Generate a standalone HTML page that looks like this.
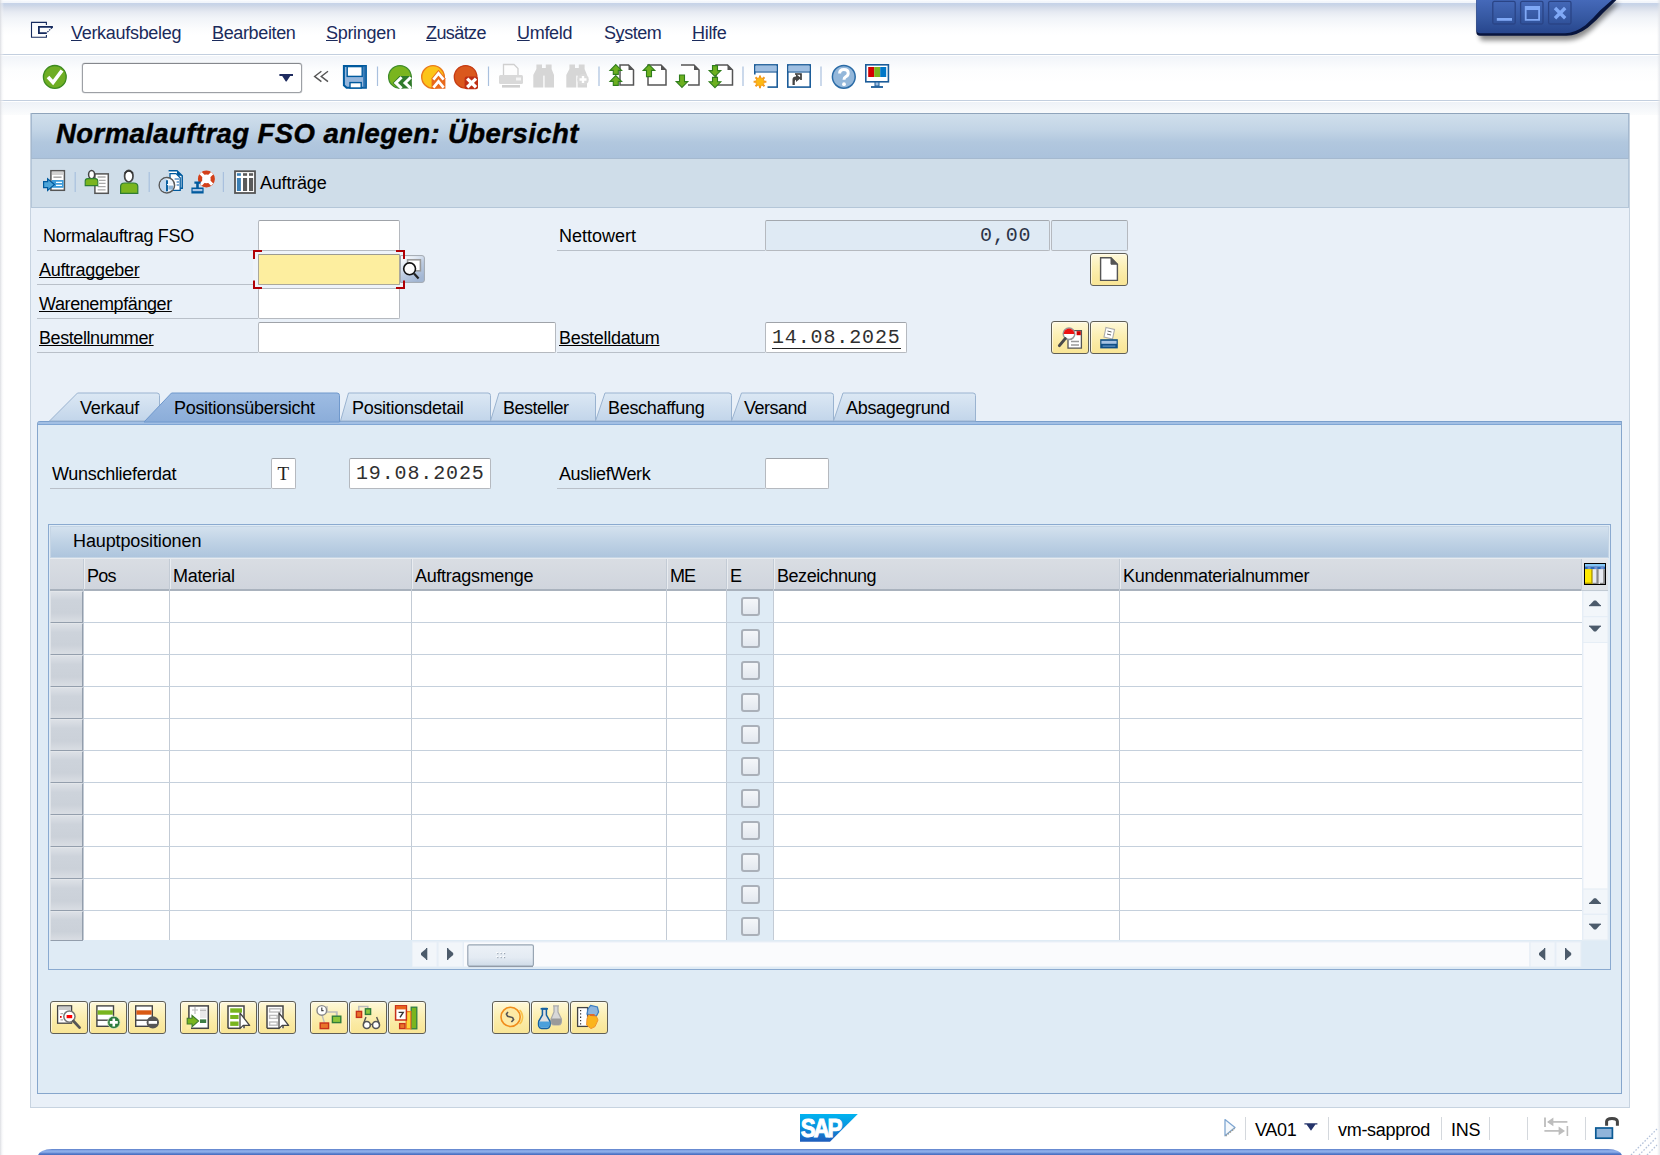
<!DOCTYPE html>
<html>
<head>
<meta charset="utf-8">
<title>Normalauftrag FSO anlegen: Übersicht</title>
<style>
*{box-sizing:border-box;margin:0;padding:0}
html,body{width:1660px;height:1155px;overflow:hidden;background:#fff}
body{font-family:"Liberation Sans",sans-serif;font-size:18px;color:#000;position:relative}
.a{position:absolute}
.t{position:absolute;white-space:nowrap;line-height:20px;height:20px}
/* top */
#topgrad{left:0;top:0;width:1660px;height:36px;background:linear-gradient(#fff 0px,#f4f7fc 1px,#f1f5fb 2.6px,#c6d3e8 3.2px,#cad5e7 5px,#d8deea 8px,#e6eaf2 12px,#f1f4f8 18px,#fbfcfd 28px,#fff 35px)}
#leftedge{z-index:50;left:0;top:0;width:5px;height:1155px;background:linear-gradient(90deg,rgba(215,217,222,.85),rgba(240,241,244,.5) 2px,rgba(255,255,255,0) 4px)}
.menu{color:#1b2b5c;font-size:18px;top:23px;letter-spacing:-0.3px}
.menu u{text-decoration:underline;text-underline-offset:1px;text-decoration-thickness:1px;text-decoration-skip-ink:none}
#menuline{left:0;top:54px;width:1660px;height:2px;background:linear-gradient(#c3cfdf 0,#c3cfdf 1px,#fff 1px)}
#tbbg{left:0;top:56px;width:1660px;height:44px;background:linear-gradient(#f1f4f9,#fcfdfe 30%,#fff 60%)}
#tbline{left:0;top:100px;width:1660px;height:2px;background:linear-gradient(#c3cfdf 0,#c3cfdf 1px,#fff 1px)}
#gapbg{left:0;top:102px;width:1660px;height:13px;background:linear-gradient(#eef2f7,#fbfcfd)}
#cmd{left:82px;top:63px;width:220px;height:30px;background:#fff;border:1px solid #9da0a5;border-top-color:#85888d;border-radius:3px;box-shadow:0 0 0 0.5px rgba(150,154,160,.35)}
/* main */
#main{left:30px;top:113px;width:1600px;height:995px;background:#e9f0f8;border:1px solid #c7d3e0;border-top:none}
#titlebar{left:31px;top:113px;width:1598px;height:46px;background:linear-gradient(#d0dfec 0,#c3d5e6 35%,#b1c7de 65%,#abc2dc 100%);border:1px solid #a5b9cf;border-top-color:#8fa4bb}
#title{left:56px;top:118px;font:italic bold 27.5px "Liberation Sans",sans-serif;line-height:32px;height:32px;letter-spacing:0.43px;color:#000;-webkit-text-stroke:0.45px #000}
#apptb{left:31px;top:159px;width:1598px;height:49px;background:#cfdde9;border:1px solid #b4c6d8;border-top:none}
.lbl{font-size:18px;color:#000}
.ul{text-decoration:underline;text-underline-offset:1px;text-decoration-thickness:1px;text-decoration-skip-ink:none}
.lline{height:1px;background:#b9c0c9}
.inp{background:#fff;border:1px solid #b5b9bf;border-top-color:#9fa3a9;border-radius:2px}
.ro{background:#dfeaf4;border:1px solid #b5b9bf;border-top-color:#a3a8ae;border-radius:2px}
.mono{font-family:"Liberation Mono",monospace;font-size:20px;color:#303030;letter-spacing:0.87px !important}
.btn{background:linear-gradient(#fef8da,#fcf0b6 40%,#fae9a0 75%,#f9e596);border:1px solid #605f57;border-radius:3px;width:38px;height:33px;box-shadow:inset 1px 1px 0 rgba(255,255,255,.55)}
/* tabs */
#tabpanel{left:37px;top:421px;width:1585px;height:673px;background:linear-gradient(#7a9fcc 0,#7a9fcc 1px,#a2bfe4 1px,#a2bfe4 3px,#80a6d4 3px,#80a6d4 4px,#dfebf5 4px);border:1px solid #86a6cc;border-top:none;border-radius:3px 0 0 0}
/* table */
#tblbox{left:48px;top:524px;width:1563px;height:446px;border:1px solid #8aaad0;background:#dfebf5}
#tblcap{left:50px;top:526px;width:1559px;height:32px;background:linear-gradient(#d3e1ee,#bfd2e5 50%,#aec5dd);border:1px solid #c5d5e5}
#colhdr{left:50px;top:558px;width:1558px;height:33px;background:linear-gradient(#d9dde3,#d0d5dd);border-top:1px solid #e8ebef;border-bottom:2px solid #a9b2bd}
#grid{left:84px;top:591px;width:1498px;height:349px;background:#fff}
.hl{height:1px;background:#c5d0dc}
.vl{top:559px;width:1px;height:381px;background:#c3cbd5}
.sel{left:50px;width:33px;background:linear-gradient(#dce0e6 0,#cdd3db 28%,#cbd1d9 70%,#d9dde3 100%);border:1px solid #939eac;border-top-color:#e3e6ea;border-left-color:#dfe3e8;border-radius:1px}
#ecol{left:727px;top:591px;width:46px;height:349px;background:#dfebf5}
.cb{left:741px;width:19px;height:19px;margin-top:1px;background:linear-gradient(#f4f6f9,#e3e8ef);border:2px solid #aab0b9;border-radius:3px}
#vsb{left:1583px;top:591px;width:25px;height:350px;background:#fbfcfd;border-left:1px solid #d5dde6}
#hsb{left:412px;top:942px;width:1170px;height:25px;background:#fbfcfd}
/* status */
#status{left:0;top:1108px;width:1660px;height:47px;background:#fff}
.ssep{top:1117px;width:1px;height:23px;background:#d4d8dd}
.st{font-size:18px;color:#000;margin-top:0.6px}
#bluebar{left:38px;top:1149px;width:1584px;height:12px;background:linear-gradient(#5b7ec8 0,#86a8e6 1.6px,#8fb0ea 3px,#5f84d0 4.4px,#466bbb 6px);border-radius:14px 14px 0 0 / 7px 7px 0 0}
</style>
</head>
<body>
<!-- TOP -->
<div class="a" id="topgrad"></div>
<div class="a" id="menuline"></div>
<div class="a" id="tbbg"></div>
<div class="a" id="tbline"></div>
<div class="a" id="gapbg"></div>
<div class="a" id="leftedge"></div>
<div class="a" style="z-index:50;left:1657px;top:0;width:3px;height:1155px;background:linear-gradient(90deg,rgba(255,255,255,0),rgba(225,227,232,.8))"></div>

<svg class="a" style="left:28px;top:18px" width="30" height="24" viewBox="28 18 30 24">
<path d="M46.4 25 V22.4 H31.5 V37.3 H46.4 V35" fill="none" stroke="#152a5e" stroke-width="1.1"/>
<path d="M52.6 26.9 H38.9 V33.1 H46.8" fill="none" stroke="#152a5e" stroke-width="1.8"/>
<path d="M52 27.6 L47 32.6" stroke="#152a5e" stroke-width="1.2" stroke-dasharray="1.5 1"/>
<path d="M49.5 26.2 H53 V27.6 L51.6 28.6 Z" fill="#152a5e"/>
</svg>
<div class="t menu" style="left:71px"><u>V</u>erkaufsbeleg</div>
<div class="t menu" style="left:212px;letter-spacing:-0.36px"><u>B</u>earbeiten</div>
<div class="t menu" style="left:326px"><u>S</u>pringen</div>
<div class="t menu" style="left:426px;letter-spacing:-0.6px"><u>Z</u>usätze</div>
<div class="t menu" style="left:517px"><u>U</u>mfeld</div>
<div class="t menu" style="left:604px;letter-spacing:-0.45px">S<u>y</u>stem</div>
<div class="t menu" style="left:692px"><u>H</u>ilfe</div>

<div class="a" id="cmd"></div>

<!-- TOOLBAR ICONS -->
<svg class="a" style="left:0;top:55px" width="900" height="45" viewBox="0 55 900 45">
<g id="ic_ok">
<circle cx="54.8" cy="76.9" r="11.4" fill="#6fae24" stroke="#3c8a1f" stroke-width="1.3"/>
<path d="M48 77 L53 82.5 L62 70.5" fill="none" stroke="#fff" stroke-width="3.6" stroke-linejoin="miter"/>
</g>
<path d="M279.4 74 H293 V76 H290.2 L286.6 81.6 H285.8 L282.2 76 H279.4 Z" fill="#1f2c60"/>
<g fill="none" stroke="#555" stroke-width="1.4"><path d="M321.4 71.2 L314.6 76.4 L321.4 81.6"/><path d="M328 71.2 L321.2 76.4 L328 81.6"/></g>
<g id="ic_save">
<path d="M343.9 66 H365.9 V87.8 H346.6 L343.9 85.2 Z" fill="#95b6dc" stroke="#005a9e" stroke-width="2"/>
<rect x="347.2" y="66.6" width="15" height="9.8" fill="#fff" stroke="#005a9e" stroke-width="1.4"/>
<rect x="363.2" y="66.4" width="2.4" height="21" fill="#2f74b2"/>
<rect x="350" y="82.6" width="11.2" height="5.4" fill="#fff" stroke="#005a9e" stroke-width="1.4"/>
</g>
<g stroke="#a9c0de" stroke-width="1.2"><path d="M377.5 66.5V86"/><path d="M488.5 66.5V86"/><path d="M599 66.5V86"/><path d="M743 66.5V86"/><path d="M821 66.5V86"/></g>
<g id="ic_back">
<circle cx="399.9" cy="76.9" r="11.3" fill="#7ab51e" stroke="#3f8c2c" stroke-width="1.3"/>
<path d="M392.6 82.9 L399.4 75.9 H411.6 L412 88.6 H398.6 Z" fill="#2f7a2a"/>
<g fill="none" stroke="#fff" stroke-width="3"><path d="M401.6 77.2 L395.8 82.9 L401.6 88.4"/><path d="M410.8 77.2 L405 82.9 L410.8 88.4"/></g>
</g>
<g id="ic_exit">
<circle cx="433" cy="76.9" r="11.3" fill="#fcc419" stroke="#ea7a1c" stroke-width="1.4"/>
<path d="M431.6 88.8 V78.2 L438.5 69.8 L445.4 78.2 V88.8 Z" fill="#e8691c"/>
<g fill="none" stroke="#fff" stroke-width="2.8"><path d="M433.4 79.6 L438.5 73.4 L443.6 79.6"/><path d="M433.4 87.6 L438.5 81.4 L443.6 87.6"/></g>
</g>
<g id="ic_cancel">
<circle cx="465.6" cy="76.9" r="11.3" fill="#da581d" stroke="#c63a12" stroke-width="1.3"/>
<rect x="464.6" y="76.4" width="13.4" height="12.8" rx="2" fill="#be2f14"/>
<path d="M467.2 78.6 L476 87.2 M476 78.6 L467.2 87.2" stroke="#fff" stroke-width="3.3"/>
</g>
<g id="ic_print" >
<path d="M503.5 75 V64.5 H514 L518 68.5 V75" fill="#fdfdfd" stroke="#d0d0d0" stroke-width="1.3"/>
<rect x="499" y="75" width="24" height="9" rx="1.5" fill="#d9d9d9"/>
<rect x="516" y="77.5" width="5" height="3" fill="#f4f4f4"/>
<rect x="502" y="85" width="18" height="2.6" fill="#cfcfcf"/>
</g>
<g id="ic_find" fill="#d6d6d6">
<path d="M536.4 64.5 H542 V69 L543.3 75 V87.6 H533.3 V75 L536.4 69 Z"/>
<path d="M545.8 64.5 H551.6 V69 L554 75 V87.6 H544.6 V75 L545.8 69 Z"/>
<rect x="540" y="68" width="7" height="7.6"/>
</g>
<g id="ic_findn" fill="#d6d6d6">
<path d="M569.4 64.5 H575 V69 L576.3 75 V87.6 H566.3 V75 L569.4 69 Z"/>
<path d="M578.8 64.5 H584.6 V69 L587 75 V87.6 H577.6 V75 L578.8 69 Z"/>
<rect x="573" y="68" width="7" height="7.6"/>
<circle cx="583" cy="79.5" r="5.8" fill="#dadada"/>
<path d="M583 76 V83 M579.5 79.5 H586.5" stroke="#fff" stroke-width="2.4"/>
</g>
<g id="pages" fill="#fff" stroke="#555" stroke-width="1.5">
<path d="M620 65 H628.5 L633.5 70 V85 H620 Z"/>
<path d="M648 65 H661 L666 70 V85 H648 Z"/>
<path d="M681 65 H694 L699 70 V85 H688"/>
<path d="M716 65 H727.5 L732.5 70 V85 H716 Z"/>
</g>
<g fill="#555"><path d="M628.5 65 L633.5 70 H628.5Z"/><path d="M661 65 L666 70 H661Z"/><path d="M694 65 L699 70 H694Z"/><path d="M727.5 65 L732.5 70 H727.5Z"/></g>
<g fill="#6db020" stroke="#2f7d1c" stroke-width="1.1">
<path d="M615.8 64.6 L621.6 70.4 H618.3 V74.4 H613.3 V70.4 H610 Z"/>
<path d="M615.8 75.6 L621.6 81.4 H618.3 V85.4 H613.3 V81.4 H610 Z"/>
<path d="M649 64.6 L654.8 70.4 H651.5 V76.6 H646.5 V70.4 H643.2 Z"/>
<path d="M682 87.4 L687.8 81.6 H684.5 V75 H679.5 V81.6 H676.2 Z"/>
<path d="M715 76.4 L720.8 70.6 H717.5 V65.6 H712.5 V70.6 H709.2 Z"/>
<path d="M715 87.6 L720.8 81.8 H717.5 V77.4 H712.5 V81.8 H709.2 Z"/>
</g>
<g id="ic_newsess">
<rect x="754.8" y="64.9" width="22.4" height="22.2" fill="#fff" stroke="#1b5c99" stroke-width="1.6"/>
<rect x="755.6" y="65.7" width="20.8" height="5.8" fill="#9fbfe2"/>
<path d="M755 72H777" stroke="#1b5c99" stroke-width="1.2"/>
<rect x="752.5" y="74.5" width="15" height="14.5" fill="#fff"/>
<g stroke="#f39a1e" stroke-width="2"><path d="M760 75.4V88.2M753.6 81.8H766.4M755.5 77.3L764.5 86.3M764.5 77.3L755.5 86.3"/></g>
<circle cx="760" cy="81.8" r="4.1" fill="#fcb813" stroke="#f39a1e" stroke-width="0.8"/>
</g>
<g id="ic_shortcut">
<rect x="787.8" y="64.9" width="22.4" height="22.2" fill="#fff" stroke="#1b5c99" stroke-width="1.6"/>
<rect x="788.6" y="65.7" width="20.8" height="5.8" fill="#9fbfe2"/>
<path d="M788 72H810" stroke="#1b5c99" stroke-width="1.2"/>
<path d="M792.5 85 V79.5 Q792.5 76.5 796 76.5 V74 L801 78 L796 82 V79.8 Q794.8 79.8 794.8 81.5 V85 Z" fill="#444"/>
<path d="M795 74 H801 V80" fill="none" stroke="#333" stroke-width="1.6"/>
</g>
<g id="ic_help">
<circle cx="843.8" cy="76.8" r="11.4" fill="#93b7da" stroke="#2a6ba6" stroke-width="1.5"/>
<path d="M839.6 73.6 Q839.6 69.6 843.8 69.6 Q848.2 69.6 848.2 73.2 Q848.2 75.6 845.6 76.8 Q844 77.6 844 79.8" fill="none" stroke="#fff" stroke-width="3"/>
<circle cx="844" cy="84.2" r="1.9" fill="#fff"/>
</g>
<g id="ic_mon">
<rect x="865.8" y="64.8" width="22.6" height="17" fill="#fff" stroke="#1b5c99" stroke-width="1.6"/>
<rect x="868.2" y="67" width="6" height="10" fill="#d40000"/><rect x="874.2" y="67" width="6" height="10" fill="#7ab51d"/><rect x="880.2" y="67" width="6" height="10" fill="#0077c8"/>
<rect x="875" y="82" width="4" height="4" fill="#9fbfe2" stroke="#1b5c99" stroke-width="1"/>
<path d="M871 87H883" stroke="#1b5c99" stroke-width="1.8"/>
</g>
</svg>

<!-- WINDOW CONTROLS -->
<svg class="a" style="left:1440px;top:0" width="220" height="56" viewBox="1440 0 220 56">
<defs>
<linearGradient id="wg" x1="0" y1="0" x2="0" y2="1"><stop offset="0" stop-color="#4569b9"/><stop offset="0.6" stop-color="#34569f"/><stop offset="1" stop-color="#27468d"/></linearGradient>
<filter id="wsh" x="-10%" y="-30%" width="120%" height="190%"><feGaussianBlur stdDeviation="2.6"/></filter>
</defs>
<path d="M1478 0 V33 Q1478 37.5 1482 37.5 H1566 Q1578 37.5 1590 27 L1618 0 Z" fill="#000" opacity=".45" filter="url(#wsh)" transform="translate(1.5 3)"/>
<path d="M1476.3 0 V31.8 Q1476.3 35.8 1480 35.8 H1566.5 Q1577 35.8 1588 27.6 Q1597 20 1603 13 L1616.4 0 Z" fill="#08153e"/>
<path d="M1476.3 0 V29.8 Q1476.3 33.2 1480 33.2 H1565 Q1574.5 33.2 1585.4 25.2 Q1594 17.6 1600 10.6 L1612 0 Z" fill="url(#wg)"/>
<g fill="none" stroke="#2a4486" stroke-width="1.3">
<rect x="1492.8" y="1.4" width="22.4" height="22.6" rx="1.5"/>
<rect x="1520.6" y="1.4" width="22.4" height="22.6" rx="1.5"/>
<rect x="1548.6" y="1.4" width="22.4" height="22.6" rx="1.5"/>
</g>
<rect x="1496.8" y="18" width="15.2" height="2.8" fill="#80a9f6"/>
<path d="M1524.8 6 H1540 V20.8 H1524.8 Z M1526.6 10 V19 H1538.2 V10 Z" fill="#80a9f6" fill-rule="evenodd"/>
<path d="M1555 8 L1565.2 18.2 M1565.2 8 L1555 18.2" stroke="#80a9f6" stroke-width="3.4"/>
</svg>

<!-- MAIN -->
<div class="a" id="main"></div>
<div class="a" id="titlebar"></div>
<div class="t" id="title">Normalauftrag FSO anlegen: Übersicht</div>
<div class="a" id="apptb"></div>
<div class="t lbl" style="left:260px;top:173px;letter-spacing:-0.2px">Aufträge</div>

<!-- APP TOOLBAR ICONS -->
<svg class="a" style="left:30px;top:160px" width="300" height="46" viewBox="30 160 300 46">
<g stroke="#a9c0de" stroke-width="1.2"><path d="M75.2 172V192"/><path d="M149.2 172V192"/><path d="M223.4 172V192"/></g>
<g id="a1">
<rect x="50.9" y="170.7" width="13.5" height="19.6" fill="#fff" stroke="#555" stroke-width="1.5"/>
<rect x="52" y="172" width="11.4" height="3" fill="#d2d2d2"/>
<path d="M53.4 177.2H61.6" stroke="#a8a8a8" stroke-width="1.5"/>
<rect x="51.8" y="180" width="11.8" height="7.8" fill="#3d9bd9"/>
<path d="M56 182.4H62M56 185.4H62" stroke="#fff" stroke-width="1.3"/>
<path d="M43.6 181.6 H47.6 V178.8 L54.4 184.6 L47.6 190.4 V187.6 H43.6 Z" fill="#4da5d9" stroke="#005a9e" stroke-width="1.2"/>
</g>
<g id="a2">
<rect x="94.9" y="173.9" width="13.4" height="19.4" fill="#fff" stroke="#555" stroke-width="1.5"/>
<path d="M97.6 177H105.6M99 180.4H105.6M99 183.4H105.6M97.6 186.6H105.6M97.6 189.8H105.6" stroke="#aaa" stroke-width="1.3"/>
<ellipse cx="91.6" cy="174.6" rx="3" ry="4.2" fill="#fff" stroke="#444" stroke-width="1.5"/>
<path d="M85.2 185.6 V181 Q85.2 178.6 88 178.6 H95 Q97.8 178.6 97.8 181 V185.6 Z" fill="#7ab51e" stroke="#2f7d32" stroke-width="1.1"/>
</g>
<g id="a3">
<ellipse cx="128.8" cy="176.2" rx="4.2" ry="5.8" fill="#fff" stroke="#444" stroke-width="1.7"/>
<path d="M124.6 173.4 Q128.8 168.6 133 173.4" fill="none" stroke="#333" stroke-width="1.6"/>
<path d="M120.6 193.4 V186.4 Q120.6 183.2 124.6 183 H133.4 Q137.8 183.2 137.8 186.4 V193.4 Z" fill="#7ab51e" stroke="#2f7d32" stroke-width="1.2"/>
</g>
<g id="a4">
<path d="M168.6 170.7 H177 L182.2 175.8 V188.2 H176" fill="#fff" stroke="#005a9e" stroke-width="1.5"/>
<path d="M177 170.7 V175.8 H182.2 Z" fill="#005a9e"/>
<path d="M170 173.6 H176 L180.2 177.8 V190.4 H170 Z" fill="#fff" stroke="#005a9e" stroke-width="1.3"/>
<path d="M174.6 179H179M176.6 182H179M176.6 185H179" stroke="#5a93c8" stroke-width="1.3"/>
<circle cx="166.9" cy="185.2" r="7.7" fill="#eef4fa" stroke="#5a5a5a" stroke-width="1.5"/>
<path d="M166.9 178.2 A7 7 0 0 0 166.9 192.2 Z" fill="#c2d8ee"/>
<rect x="168.4" y="185.6" width="4.6" height="4" fill="#8fb3d4"/>
<path d="M167 180.2 V191.2" stroke="#005a9e" stroke-width="1.9"/>
<path d="M167 184.6 H173" stroke="#fff" stroke-width="1"/>
</g>
<g id="a5">
<circle cx="206.4" cy="178.9" r="6.4" fill="#fff" stroke="#d3401a" stroke-width="4.2"/>
<path d="M200.6 173.1 L212.2 184.7 M212.2 173.1 L200.6 184.7" stroke="#fff" stroke-width="3.2"/>
<path d="M194.4 181.6 H200.6 V183.8 H198.8 V187.4 H203.6 V193.4 H191.4 V187.4 H196.2 V183.8 H194.4 Z" fill="#005a9e"/>
<rect x="192.6" y="189" width="9.8" height="2.2" fill="#a9c4e4"/>
</g>
<g id="a6">
<rect x="235" y="171.2" width="20" height="21.8" fill="#fff" stroke="#555" stroke-width="1.8"/>
<rect x="236.9" y="178" width="4" height="13" fill="#3a7fb5"/><rect x="236.9" y="173.2" width="4" height="2.6" fill="#3a7fb5"/>
<rect x="243" y="178" width="4.1" height="13" fill="#5a5a5a"/><rect x="243" y="173.2" width="4.1" height="2.6" fill="#5a5a5a"/>
<rect x="249" y="178" width="4.1" height="13" fill="#5a5a5a"/><rect x="249" y="173.2" width="4.1" height="2.6" fill="#5a5a5a"/>
</g>
</svg>

<!-- FORM -->
<div class="t lbl" style="left:43px;top:226px;letter-spacing:-0.3px">Normalauftrag FSO</div>
<div class="t lbl ul" style="left:39px;top:260px;letter-spacing:-0.3px">Auftraggeber</div>
<div class="t lbl ul" style="left:39px;top:294px;letter-spacing:-0.4px">Warenempfänger</div>
<div class="t lbl ul" style="left:39px;top:328px;letter-spacing:-0.42px">Bestellnummer</div>
<div class="t lbl" style="left:559px;top:226px;letter-spacing:0px">Nettowert</div>
<div class="t lbl ul" style="left:559px;top:328px;letter-spacing:-0.3px">Bestelldatum</div>
<div class="a lline" style="left:37px;top:250px;width:221px"></div>
<div class="a lline" style="left:37px;top:284px;width:221px"></div>
<div class="a lline" style="left:37px;top:318px;width:221px"></div>
<div class="a lline" style="left:37px;top:352px;width:221px"></div>
<div class="a lline" style="left:557px;top:250px;width:208px"></div>
<div class="a lline" style="left:557px;top:352px;width:208px"></div>
<div class="a inp" style="left:258px;top:220px;width:142px;height:31px"></div>
<div class="a inp" style="left:258px;top:288px;width:142px;height:31px"></div>
<div class="a" style="left:253px;top:250px;width:152px;height:39px;background:#eef3fa;border-top:1px solid #b7bbc2;border-bottom:1px solid #b7bbc2"></div>
<div class="a" style="left:258px;top:254px;width:142px;height:31px;background:#fdee9f;border:1px solid #aaa89b;border-top-color:#9b9a92;border-radius:1px"></div>
<svg class="a" style="left:250px;top:246px" width="180" height="48" viewBox="250 246 180 48">
<defs><linearGradient id="f4g" x1="0" y1="0" x2="0.6" y2="1"><stop offset="0" stop-color="#ffffff"/><stop offset="0.3" stop-color="#e6edf6"/><stop offset="0.6" stop-color="#bccbe1"/><stop offset="1" stop-color="#a3b7d4"/></linearGradient></defs>

<path d="M400.5 255.6 H422 Q424.4 255.6 424.4 258 V280.2 Q424.4 282.4 422 282.4 H400.5 Z" fill="url(#f4g)" stroke="#a2a8b0" stroke-width="1"/>
<rect x="407.6" y="259.8" width="12.8" height="11" fill="#fff" stroke="#9a9a9a" stroke-width="1.6"/>
<circle cx="409.6" cy="268.8" r="5.9" fill="#fbfbfb" stroke="#111" stroke-width="1.6"/>
<path d="M414 273.4 L418.6 278.4" stroke="#222" stroke-width="2.2"/>
<g fill="none" stroke="#b00005" stroke-width="2">
<path d="M254 259 V251 H262"/><path d="M396 251 H404 V259"/><path d="M254 280.5 V288 H262"/><path d="M396 288 H404 V280.5"/>
</g>
</svg>
<div class="a inp" style="left:258px;top:322px;width:298px;height:31px"></div>
<div class="a ro" style="left:765px;top:220px;width:285px;height:31px"></div>
<div class="t mono" style="left:980px;top:226px;color:#2b3346">0,00</div>
<div class="a ro" style="left:1051px;top:220px;width:77px;height:31px"></div>
<div class="a inp" style="left:765px;top:322px;width:142px;height:31px"></div>
<div class="t mono" style="left:772px;top:328px">14.08.2025</div>
<div class="a" style="left:772px;top:348px;width:129px;height:1px;background:#222"></div>
<div class="a btn" id="b_doc" style="left:1090px;top:253px"></div>
<div class="a btn" id="b_find" style="left:1051px;top:321px"></div>
<div class="a btn" id="b_stamp" style="left:1090px;top:321px"></div>
<svg class="a" style="left:1045px;top:250px" width="90" height="110" viewBox="1045 250 90 110">
<path d="M1100.6 257.8 H1111 L1117.4 264.2 V280.4 H1100.6 Z" fill="#fff" stroke="#555" stroke-width="1.4"/>
<path d="M1111 257.8 L1117.4 264.2 H1111 Z" fill="#555" stroke="#555" stroke-width="1"/>
<g id="fi">
<path d="M1068 330.6 H1081.4 V348.2 H1068 Z" fill="#fff" stroke="#555" stroke-width="1.3"/>
<rect x="1076.6" y="331.2" width="4.2" height="4" fill="#d00000"/>
<path d="M1071 341.5H1079M1071 345H1079" stroke="#999" stroke-width="1.4"/>
<circle cx="1069" cy="333.8" r="5.8" fill="#fff" stroke="#999" stroke-width="1.5"/>
<path d="M1063.6 334 A5.4 5.4 0 0 1 1074.4 334 Z" fill="#ee1111"/>
<path d="M1065.2 338.6 L1059.4 345.6" stroke="#4a4a4a" stroke-width="3" stroke-linecap="round"/>
</g>
<g id="st">
<path d="M1106 327.5 L1114.5 329.5 L1112.5 339 L1104 337 Z" fill="#fff" stroke="#aaa" stroke-width="1.1"/>
<path d="M1107.5 331 L1111.5 332 M1107 334 L1111 335" stroke="#666" stroke-width="1"/>
<rect x="1100.2" y="339.2" width="17.6" height="9.2" fill="#0f4f86"/>
<rect x="1101.4" y="340.8" width="15.2" height="3" fill="#a6c3e4"/>
<rect x="1102.6" y="345.6" width="12.8" height="1" fill="#6f9fd0"/>
</g>
</svg>

<!-- TABS -->
<div class="a" id="tabpanel"></div>
<svg class="a" style="left:0;top:385px" width="1000" height="42" viewBox="0 385 1000 42">
<defs>
<linearGradient id="tg" x1="0" y1="0" x2="0" y2="1"><stop offset="0" stop-color="#dce8f4"/><stop offset="1" stop-color="#c2d5ea"/></linearGradient>
<linearGradient id="tga" x1="0" y1="0" x2="0" y2="1"><stop offset="0" stop-color="#9ebce3"/><stop offset="1" stop-color="#8badd9"/></linearGradient>
</defs>
<g stroke="#9ab3d0" stroke-width="1" fill="url(#tg)">
<path d="M49.5 421 L77.5 393 L157 393 Q159.5 393 159.5 395.5 L159.5 421 Z"/>
<path d="M340.5 421 L348.5 393 L488 393 Q490.5 393 490.5 395.5 L490.5 421 Z"/>
<path d="M490.5 421 L499 393 L593 393 Q595.5 393 595.5 395.5 L595.5 421 Z"/>
<path d="M595.5 421 L605 393 L729 393 Q731.5 393 731.5 395.5 L731.5 421 Z"/>
<path d="M731.5 421 L741.5 393 L831 393 Q833.5 393 833.5 395.5 L833.5 421 Z"/>
<path d="M833.5 421 L843 393 L973 393 Q975.5 393 975.5 395.5 L975.5 421 Z"/>
</g>
<path d="M144 422 L171.5 393 L337 393 Q339.5 393 339.5 395.5 L339.5 422 Z" fill="url(#tga)" stroke="#6f98cc" stroke-width="1"/>
</svg>
<div class="t lbl" style="left:80px;top:398px;letter-spacing:-0.3px">Verkauf</div>
<div class="t lbl" style="left:174px;top:398px;letter-spacing:-0.3px">Positionsübersicht</div>
<div class="t lbl" style="left:352px;top:398px;letter-spacing:-0.3px">Positionsdetail</div>
<div class="t lbl" style="left:503px;top:398px;letter-spacing:-0.5px">Besteller</div>
<div class="t lbl" style="left:608px;top:398px;letter-spacing:-0.3px">Beschaffung</div>
<div class="t lbl" style="left:744px;top:398px;letter-spacing:-0.5px">Versand</div>
<div class="t lbl" style="left:846px;top:398px;letter-spacing:-0.3px">Absagegrund</div>
<div class="t lbl" style="left:52px;top:464px;letter-spacing:-0.3px">Wunschlieferdat</div>
<div class="a lline" style="left:50px;top:488px;width:221px"></div>
<div class="a inp" style="left:271px;top:458px;width:25px;height:31px"></div>
<div class="t" style="left:277.5px;top:464px;font-family:'Liberation Serif',serif;font-size:19px;color:#222">T</div>
<div class="a inp" style="left:349px;top:458px;width:142px;height:31px"></div>
<div class="t mono" style="left:356px;top:464px">19.08.2025</div>
<div class="t lbl" style="left:559px;top:464px;letter-spacing:-0.4px">AusliefWerk</div>
<div class="a lline" style="left:557px;top:488px;width:208px"></div>
<div class="a inp" style="left:765px;top:458px;width:64px;height:31px"></div>

<!-- TABLE -->
<div class="a" id="tblbox"></div>
<div class="a" id="tblcap"></div>
<div class="t lbl" style="left:73px;top:531px;letter-spacing:-0.12px">Hauptpositionen</div>
<div class="a" id="colhdr"></div>
<div class="a" id="grid"></div>
<div class="a" id="ecol"></div>
<div class="a vl" style="left:83px"></div>
<div class="a" style="left:84px;top:559px;width:1px;height:30px;background:#e9ecf0"></div>
<div class="a vl" style="left:169px"></div>
<div class="a" style="left:170px;top:559px;width:1px;height:30px;background:#e9ecf0"></div>
<div class="a vl" style="left:411px"></div>
<div class="a" style="left:412px;top:559px;width:1px;height:30px;background:#e9ecf0"></div>
<div class="a vl" style="left:666px"></div>
<div class="a" style="left:667px;top:559px;width:1px;height:30px;background:#e9ecf0"></div>
<div class="a vl" style="left:726px"></div>
<div class="a" style="left:727px;top:559px;width:1px;height:30px;background:#e9ecf0"></div>
<div class="a vl" style="left:773px"></div>
<div class="a" style="left:774px;top:559px;width:1px;height:30px;background:#e9ecf0"></div>
<div class="a vl" style="left:1119px"></div>
<div class="a" style="left:1120px;top:559px;width:1px;height:30px;background:#e9ecf0"></div>
<div class="a vl" style="left:1581px;height:32px"></div>
<div class="a sel" style="top:591px;height:32px"></div>
<div class="a cb" style="top:596px"></div>
<div class="a sel" style="top:623px;height:32px"></div>
<div class="a hl" style="top:622px;left:84px;width:1498px"></div>
<div class="a cb" style="top:628px"></div>
<div class="a sel" style="top:655px;height:32px"></div>
<div class="a hl" style="top:654px;left:84px;width:1498px"></div>
<div class="a cb" style="top:660px"></div>
<div class="a sel" style="top:687px;height:32px"></div>
<div class="a hl" style="top:686px;left:84px;width:1498px"></div>
<div class="a cb" style="top:692px"></div>
<div class="a sel" style="top:719px;height:32px"></div>
<div class="a hl" style="top:718px;left:84px;width:1498px"></div>
<div class="a cb" style="top:724px"></div>
<div class="a sel" style="top:751px;height:32px"></div>
<div class="a hl" style="top:750px;left:84px;width:1498px"></div>
<div class="a cb" style="top:756px"></div>
<div class="a sel" style="top:783px;height:32px"></div>
<div class="a hl" style="top:782px;left:84px;width:1498px"></div>
<div class="a cb" style="top:788px"></div>
<div class="a sel" style="top:815px;height:32px"></div>
<div class="a hl" style="top:814px;left:84px;width:1498px"></div>
<div class="a cb" style="top:820px"></div>
<div class="a sel" style="top:847px;height:32px"></div>
<div class="a hl" style="top:846px;left:84px;width:1498px"></div>
<div class="a cb" style="top:852px"></div>
<div class="a sel" style="top:879px;height:32px"></div>
<div class="a hl" style="top:878px;left:84px;width:1498px"></div>
<div class="a cb" style="top:884px"></div>
<div class="a sel" style="top:911px;height:30px"></div>
<div class="a hl" style="top:910px;left:84px;width:1498px"></div>
<div class="a cb" style="top:916px"></div>
<div class="t lbl" style="left:87px;top:566px;letter-spacing:-0.7px">Pos</div>
<div class="t lbl" style="left:173px;top:566px;letter-spacing:-0.3px">Material</div>
<div class="t lbl" style="left:415px;top:566px;letter-spacing:-0.3px">Auftragsmenge</div>
<div class="t lbl" style="left:670px;top:566px;letter-spacing:-1.1px">ME</div>
<div class="t lbl" style="left:730px;top:566px;letter-spacing:-0.3px">E</div>
<div class="t lbl" style="left:777px;top:566px;letter-spacing:-0.45px">Bezeichnung</div>
<div class="t lbl" style="left:1123px;top:566px;letter-spacing:-0.3px">Kundenmaterialnummer</div>
<!-- SCROLLBARS -->
<div class="a" style="left:1582px;top:559px;width:26px;height:31px;background:linear-gradient(#e4e7eb,#dde1e6)"></div>
<svg class="a" style="left:400px;top:555px" width="1215" height="420" viewBox="400 555 1215 420">
<defs><linearGradient id="thg" x1="0" y1="0" x2="0" y2="1"><stop offset="0" stop-color="#ecf1f7"/><stop offset="0.6" stop-color="#e4ebf3"/><stop offset="1" stop-color="#cfdbe8"/></linearGradient></defs>
<!-- config icon -->
<rect x="1584.5" y="563.5" width="21" height="21" fill="#eef0f4" stroke="#000" stroke-width="1"/>
<rect x="1585" y="564" width="20" height="2.4" fill="#84c8f6"/>
<rect x="1585" y="566.4" width="20" height="2.8" fill="#2b6cb8"/>
<rect x="1587.6" y="566.4" width="3" height="2.8" fill="#6f8fd0"/><rect x="1594.4" y="566.4" width="3" height="2.8" fill="#6f8fd0"/><rect x="1600.6" y="566.4" width="3" height="2.8" fill="#6f8fd0"/>
<rect x="1585" y="569.2" width="7.8" height="14.8" fill="#b39e00"/>
<rect x="1585" y="569.2" width="6.2" height="13.4" fill="#ffea00"/>
<rect x="1592.8" y="569.2" width="6" height="14.8" fill="#8a8a8a"/><rect x="1592.8" y="569.2" width="3.6" height="13.6" fill="#e8ebf2"/>
<rect x="1598.8" y="569.2" width="6.2" height="14.8" fill="#8a8a8a"/><rect x="1598.8" y="569.2" width="1" height="14.8" fill="#fff"/><rect x="1599.8" y="569.2" width="3.4" height="13.6" fill="#e8ebf2"/>
<!-- vertical scrollbar -->
<rect x="1582" y="590.6" width="26.4" height="350" fill="#e6eef6"/>
<rect x="1583.4" y="643" width="24" height="245.4" fill="#fafbfd"/>
<g fill="#f2f6fa">
<rect x="1583.4" y="591.2" width="24" height="24.8"/><rect x="1583.4" y="617.2" width="24" height="24.8"/>
<rect x="1583.4" y="889.6" width="24" height="24"/><rect x="1583.4" y="915" width="24" height="24.4"/>
</g>
<g fill="#4c5b6b">
<path d="M1589 605.8 L1594 600.4 H1596 L1601 605.8 Z"/><rect x="1589" y="605" width="12" height="1.2"/>
<path d="M1589 626 L1594 631.4 H1596 L1601 626 Z"/><rect x="1589" y="625.6" width="12" height="1.2"/>
<path d="M1589 903.6 L1594 898.2 H1596 L1601 903.6 Z"/><rect x="1589" y="902.8" width="12" height="1.2"/>
<path d="M1589 924 L1594 929.4 H1596 L1601 924 Z"/><rect x="1589" y="923.6" width="12" height="1.2"/>
</g>
<!-- horizontal scrollbar -->
<rect x="412" y="941" width="1169.4" height="26" fill="#e6eef6"/>
<rect x="464" y="942.4" width="1065.2" height="24" fill="#fafbfd"/>
<g fill="#f2f6fa">
<rect x="412.6" y="942.4" width="24" height="24"/><rect x="438.6" y="942.4" width="24" height="24"/>
<rect x="1530.6" y="942.4" width="24" height="24"/><rect x="1556.4" y="942.4" width="24" height="24"/>
</g>
<g fill="#4c5b6b">
<path d="M427 948 V960 L421 955 V953 Z"/><rect x="426" y="948" width="1.3" height="12"/>
<path d="M447.2 948 V960 L453.2 955 V953 Z"/><rect x="447" y="948" width="1.3" height="12"/>
<path d="M1545 948 V960 L1539 955 V953 Z"/><rect x="1544" y="948" width="1.3" height="12"/>
<path d="M1565.2 948 V960 L1571.2 955 V953 Z"/><rect x="1565" y="948" width="1.3" height="12"/>
</g>
<rect x="467.8" y="944.8" width="65.6" height="21.2" rx="1.5" fill="url(#thg)" stroke="#98a5b3" stroke-width="1.2"/>
<path d="M468.5 966.6 H533" stroke="#8d97a3" stroke-width="1"/>
<g fill="#fff"><rect x="496.4" y="952" width="1.4" height="1.4"/><rect x="499.8" y="952" width="1.4" height="1.4"/><rect x="503.2" y="952" width="1.4" height="1.4"/><rect x="496.4" y="956" width="1.4" height="1.4"/><rect x="499.8" y="956" width="1.4" height="1.4"/><rect x="503.2" y="956" width="1.4" height="1.4"/></g>
<g fill="#9aa5b2"><rect x="497.2" y="953" width="1.2" height="1.2"/><rect x="500.6" y="953" width="1.2" height="1.2"/><rect x="504" y="953" width="1.2" height="1.2"/><rect x="497.2" y="957" width="1.2" height="1.2"/><rect x="500.6" y="957" width="1.2" height="1.2"/><rect x="504" y="957" width="1.2" height="1.2"/></g>
</svg>


<!-- BUTTONS -->
<div class="a btn" id="bb0" style="left:50px;top:1001px;height:33px"></div>
<div class="a btn" id="bb1" style="left:89px;top:1001px;height:33px"></div>
<div class="a btn" id="bb2" style="left:128px;top:1001px;height:33px"></div>
<div class="a btn" id="bb3" style="left:180px;top:1001px;height:33px"></div>
<div class="a btn" id="bb4" style="left:219px;top:1001px;height:33px"></div>
<div class="a btn" id="bb5" style="left:258px;top:1001px;height:33px"></div>
<div class="a btn" id="bb6" style="left:310px;top:1001px;height:33px"></div>
<div class="a btn" id="bb7" style="left:349px;top:1001px;height:33px"></div>
<div class="a btn" id="bb8" style="left:388px;top:1001px;height:33px"></div>
<div class="a btn" id="bb9" style="left:492px;top:1001px;height:33px"></div>
<div class="a btn" id="bb10" style="left:531px;top:1001px;height:33px"></div>
<div class="a btn" id="bb11" style="left:570px;top:1001px;height:33px"></div>
<!-- BUTTON ICONS -->
<svg class="a" style="left:45px;top:1000px" width="570" height="36" viewBox="45 1000 570 36">
<!-- 1 detail -->
<rect x="57.6" y="1005.8" width="14" height="17.4" fill="#fff" stroke="#444" stroke-width="1.3"/>
<rect x="58.2" y="1007" width="12.8" height="3" fill="#ccc"/>
<path d="M60.5 1013.6H63M60.5 1019.8H63" stroke="#aaa" stroke-width="1.3"/><rect x="60" y="1016" width="1.6" height="1.8" fill="#d00"/>
<circle cx="69.4" cy="1016.6" r="5.6" fill="#fff" stroke="#777" stroke-width="1.5"/>
<rect x="66.6" y="1015" width="5.6" height="3.2" fill="#f00"/>
<path d="M73.4 1021 L79.6 1027.6" stroke="#555" stroke-width="2.8" stroke-linecap="round"/>
<!-- 2 add row -->
<rect x="96.9" y="1005.9" width="16.6" height="20.4" fill="#fff" stroke="#444" stroke-width="1.4"/>
<rect x="97.6" y="1010.3" width="15.2" height="4.4" fill="#79b51f"/>
<path d="M97 1020.2H113" stroke="#444" stroke-width="1.4"/>
<circle cx="113.8" cy="1022.4" r="6.2" fill="#2c7a3c" stroke="#cfe5c0" stroke-width="0.8"/>
<path d="M113.8 1018.4V1026.4M109.8 1022.4H117.8" stroke="#fff" stroke-width="2.6"/>
<!-- 3 delete row -->
<rect x="135.7" y="1005.9" width="16.6" height="20.4" fill="#fff" stroke="#444" stroke-width="1.4"/>
<rect x="136.4" y="1010.3" width="15.2" height="4.4" fill="#d95a14"/>
<path d="M136 1020.2H152" stroke="#444" stroke-width="1.4"/>
<circle cx="152.8" cy="1022.4" r="6.2" fill="#555"/>
<path d="M148.6 1022.4H157" stroke="#fff" stroke-width="2.8"/>
<!-- 4 -->
<rect x="188.9" y="1005.9" width="19.4" height="22.4" fill="#fff" stroke="#444" stroke-width="1.5"/>
<rect x="200" y="1008" width="6.6" height="10" fill="#e9e9e9"/><path d="M195 1007V1014M192 1010H198M200 1010.4H206" stroke="#bbb" stroke-width="1.2"/>
<rect x="186.4" y="1024" width="4.6" height="5.6" fill="#fdeea6"/>
<path d="M187.2 1018.2 H192 V1015.4 L198.6 1021 L192 1026.8 V1024 H187.2 Z" fill="#79b51f" stroke="#3d7a2a" stroke-width="1.1"/>
<rect x="200" y="1019.4" width="6.2" height="3.6" fill="#3d7d45"/>
<!-- 5 -->
<path d="M228 1028.3 V1005.9 H244 V1028.3" fill="#fff" stroke="#444" stroke-width="1.5"/><path d="M228 1028.3H240" stroke="#444" stroke-width="1.5"/>
<rect x="230.2" y="1008.3" width="11.8" height="4.4" fill="#79b51f"/><rect x="230.2" y="1015" width="8.4" height="4" fill="#79b51f"/><rect x="230.2" y="1021.5" width="8.4" height="4.4" fill="#79b51f"/>
<path d="M240 1013 V1028.6 L243.2 1025.4 H249.6 Z" fill="#fff" stroke="#444" stroke-width="1.3" stroke-linejoin="round"/>
<!-- 6 -->
<path d="M267 1028.3 V1005.9 H283 V1028.3" fill="#fff" stroke="#444" stroke-width="1.5"/><path d="M267 1028.3H279" stroke="#444" stroke-width="1.5"/>
<g fill="none" stroke="#bdbdbd" stroke-width="1.4"><rect x="269.6" y="1008.8" width="11" height="3.2"/><rect x="269.6" y="1015.4" width="7.6" height="3"/><rect x="269.6" y="1022" width="7.6" height="3.2"/></g>
<path d="M279 1013 V1028.6 L282.2 1025.4 H288.6 Z" fill="#fff" stroke="#444" stroke-width="1.3" stroke-linejoin="round"/>
<!-- 7 -->
<path d="M327 1006 V1012 H337 V1016" fill="none" stroke="#bbb" stroke-width="1.4"/>
<path d="M322 1015 L324.4 1022.6 M336.5 1012 V1016" stroke="#bbb" stroke-width="1.4"/>
<circle cx="321.8" cy="1010.4" r="4.8" fill="#fff" stroke="#888" stroke-width="1.4"/><path d="M321.8 1007.6V1010.6H323.6" stroke="#444" stroke-width="1.2" fill="none"/>
<rect x="332.4" y="1016.2" width="8.4" height="6.4" fill="#8cc63a" stroke="#2f7d3a" stroke-width="1.4"/>
<rect x="320.2" y="1023" width="8.4" height="5.6" fill="#e8742a" stroke="#c7301a" stroke-width="1.4"/>
<!-- 8 -->
<path d="M358.8 1011 V1006.6 H367.8 V1008.4" fill="none" stroke="#bbb" stroke-width="1.5"/>
<rect x="356.4" y="1011.4" width="5.2" height="6" fill="#e8742a" stroke="#c7301a" stroke-width="1.4"/>
<rect x="365.4" y="1008.8" width="5.2" height="5.6" fill="#8cc63a" stroke="#2f7d3a" stroke-width="1.4"/>
<g fill="#fff" stroke="#555" stroke-width="1.6"><circle cx="366.8" cy="1025" r="3.5"/><circle cx="376" cy="1025" r="3.5"/></g>
<path d="M370.3 1024.4 H372.5 M363.4 1024 L366 1017 M379.4 1024 L376.6 1017" stroke="#555" stroke-width="1.4" fill="none"/>
<!-- 9 -->
<rect x="411.2" y="1007.2" width="5.6" height="21.6" fill="#79b51f" stroke="#2f7d45" stroke-width="1.3"/>
<rect x="406.2" y="1011.6" width="4.6" height="17.2" fill="#fdd43a" stroke="#ee7b1c" stroke-width="1.3"/>
<rect x="395.6" y="1005.8" width="10.8" height="14.2" fill="#fff" stroke="#c7301a" stroke-width="1.5"/>
<rect x="396" y="1006" width="10" height="3.4" fill="#e8641c"/>
<path d="M398.6 1012.4 H403.2 L400 1017.4" fill="none" stroke="#333" stroke-width="1.4"/>
<rect x="399.6" y="1023.6" width="5.4" height="5" fill="#e8742a" stroke="#c7301a" stroke-width="1.3"/>
<!-- 10 -->
<circle cx="510.6" cy="1016.9" r="9.6" fill="#fdeaa6" stroke="#f08d1c" stroke-width="1.6"/>
<path d="M518 1010 A9.6 9.6 0 0 1 518 1024" fill="none" stroke="#f8c24a" stroke-width="1.5" transform="translate(1.6 0)"/>
<path d="M508 1012 L506.4 1014 L507.6 1016.2 L512.6 1017.6 L513.6 1019.6 L511.4 1022" fill="none" stroke="#555" stroke-width="1.6"/>
<!-- 11 -->
<path d="M553 1005.8 H559 M554 1006 V1012 L551 1019 Q550.4 1024.8 554 1025 H558.6 Q562 1024.8 561.4 1019 L558 1012 V1006 Z" fill="#d8d8d8" stroke="#aaa" stroke-width="1.2"/>
<path d="M551.2 1018.6 H561.2 Q562 1024.8 558.6 1025 H554 Q550.4 1024.8 551.2 1018.6 Z" fill="#9a9a9a"/>
<path d="M541.6 1008.6 H547.2 M542.4 1009 V1015 L538.8 1021 Q537.6 1028.2 541.6 1028.4 H547 Q551 1028.2 549.8 1021 L546.4 1015 V1009 Z" fill="#e0e0e0" stroke="#1560a0" stroke-width="1.5"/>
<path d="M539.2 1021.6 H549.6 Q550.6 1027.6 547 1027.8 H541.6 Q538.2 1027.6 539.2 1021.6 Z" fill="#4aa0dc"/>
<rect x="540.6" y="1008" width="7.4" height="1.6" fill="#1560a0"/>
<!-- 12 -->
<rect x="577.6" y="1007.6" width="10" height="18.8" fill="#fff" stroke="#444" stroke-width="1.3"/>
<path d="M580.6 1010V1025" stroke="#333" stroke-width="1.2" stroke-dasharray="1.3 2"/>
<path d="M590.6 1005.4 L597.4 1007 L598.6 1012 L596.4 1016 L587 1014 L588 1009 Z" fill="#8fb6de" stroke="#3a7cc0" stroke-width="1.2"/>
<path d="M588.4 1015 L596.4 1016.4 L598 1020 L595 1026.6 L591 1028.6 L586.6 1025 L587 1019 Z" fill="#fbb41c" stroke="#f2922a" stroke-width="1"/>
<rect x="590" y="1014" width="4.6" height="2" fill="#e06a2a"/>
</svg>

<!-- STATUS -->
<div class="a" id="status"></div>
<div class="a ssep" style="left:1245px"></div>
<div class="a ssep" style="left:1328px"></div>
<div class="a ssep" style="left:1441px"></div>
<div class="a ssep" style="left:1489px"></div>
<div class="a ssep" style="left:1527px"></div>
<div class="a ssep" style="left:1585px"></div>
<div class="t st" style="left:1255px;top:1119px;letter-spacing:-0.3px">VA01</div>
<div class="t st" style="left:1338px;top:1119px;letter-spacing:-0.3px">vm-sapprod</div>
<div class="t st" style="left:1451px;top:1119px;letter-spacing:-0.3px">INS</div>
<!-- STATUS ICONS -->
<svg class="a" style="left:780px;top:1108px" width="880" height="47" viewBox="780 1108 880 47">
<defs><linearGradient id="sapg" x1="0" y1="0" x2="0" y2="1"><stop offset="0" stop-color="#00b4f0"/><stop offset="0.45" stop-color="#0a93de"/><stop offset="1" stop-color="#1f5cbc"/></linearGradient></defs>
<path d="M800 1114 H857.8 L830 1141.8 H800 Z" fill="url(#sapg)"/>
<text x="0" y="0" transform="translate(800.8 1137) scale(1.04 1.2)" font-family="Liberation Sans, sans-serif" font-weight="bold" font-size="21.5" letter-spacing="-2.1" fill="#fff" stroke="#fff" stroke-width="0.8">SAP</text>
<!-- triangle -->
<path d="M1225 1119.6 V1135.8 L1235 1127.4 Z" fill="#f4f8fc" stroke="#7ea6d2" stroke-width="1.3" stroke-linejoin="round"/>
<path d="M1225.6 1136 L1234.6 1128.4" stroke="#9a9a92" stroke-width="1.6" stroke-dasharray="1.4 1.4"/>
<path d="M1304.4 1123.2 H1317.4 V1124.6 H1315.4 L1311 1130.8 L1306.6 1124.6 H1304.4 Z" fill="#25346b"/>
<!-- arrows -->
<g stroke="#bdbdbd" fill="#bdbdbd">
<path d="M1545 1117.4V1127" stroke-width="1.8"/><path d="M1567.4 1126V1136" stroke-width="1.6"/>
<path d="M1548 1121.9H1567.4" stroke-width="1.7"/><path d="M1544.4 1130.9H1562" stroke-width="1.7"/>
<path d="M1547 1121.9 L1553.4 1117.6 V1126.2 Z" stroke="none"/><path d="M1565 1130.9 L1558.6 1126.6 V1135.2 Z" stroke="none"/>
</g>
<!-- lock -->
<path d="M1606.6 1125.8 V1121.6 Q1606.6 1118.4 1612 1118.4 Q1617.4 1118.4 1617.4 1121.6 V1125.8" fill="none" stroke="#454545" stroke-width="3"/>
<rect x="1595.8" y="1128" width="16.6" height="10.2" fill="#90b4da" stroke="#0b5a94" stroke-width="1.7"/>
<!-- grip -->
<g stroke="#b4c2da" stroke-width="1.3" stroke-dasharray="1.6 1.6">
<path d="M1631 1155 L1657 1129"/><path d="M1639 1155 L1657 1137"/><path d="M1647 1155 L1657 1145"/>
</g>
</svg>
<div class="a" id="bluebar"></div>
</body>
</html>
